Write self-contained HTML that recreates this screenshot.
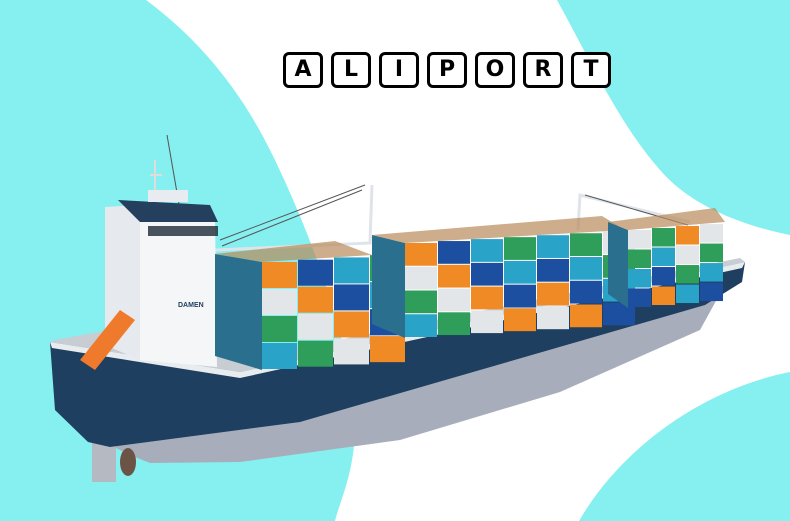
<!DOCTYPE html>
<html><head><meta charset="utf-8"><style>
html,body{margin:0;padding:0;width:790px;height:521px;overflow:hidden;background:#fff}
svg{position:absolute;left:0;top:0}
.t{position:absolute;top:52px;left:283px;display:flex;gap:8px}
.t span{width:34px;height:30px;border:3px solid #000;border-radius:6px;background:#fff;font:bold 22px "DejaVu Sans","Liberation Sans",sans-serif;display:flex;align-items:center;justify-content:center;line-height:1;color:#000}
</style></head><body>
<svg width="790" height="521" viewBox="0 0 790 521">
<rect width="790" height="521" fill="#86EFEF"/>
<path d="M146,0 C200,40 240,90 270,150 C300,210 350,330 355,420 C356,470 340,500 335,521 L579,521 C620,450 700,390 790,372 L790,235 C740,225 690,205 660,170 C620,125 590,60 557,0 Z" fill="#fff"/>
<g stroke="#dfe4ea" stroke-width="3" fill="none">
<path d="M215,250 L370,243 L372,185"/><path d="M578,230 L580,195 L690,222"/>
</g>
<g stroke="#555" stroke-width="1" fill="none"><path d="M220,240 L365,185"/><path d="M222,246 L362,190"/><path d="M585,195 L688,225"/><path d="M167,135 L180,210"/></g>
<path d="M110,445 L300,420 L700,305 L722,290 L700,330 L560,392 L400,440 L240,462 L150,463 L130,455 Z" fill="#a8adbb"/>
<rect x="92" y="440" width="24" height="42" fill="#b5b9c2"/>
<ellipse cx="128" cy="462" rx="8" ry="14" fill="#6b5445"/>
<path d="M50,342 L240,372 L745,262 L742,282 L705,305 L300,422 L110,447 L88,442 L55,410 Z" fill="#1f3f60"/>
<path d="M50,342 L240,372 L745,262 L742,268 L240,378 L52,348 Z" fill="#e9ecef"/>
<path d="M55,340 L110,330 L240,360 L740,258 L745,262 L240,372 L50,342 Z" fill="#c8cdd3"/>
<path d="M105,207 L140,205 L140,360 L105,345 Z" fill="#e6e9ee"/>
<path d="M140,210 L215,215 L217,367 L140,360 Z" fill="#f4f6f8"/>
<path d="M118,200 L210,205 L218,222 L140,222 Z" fill="#24405e"/>
<rect x="148" y="190" width="40" height="12" fill="#e8ebef"/>
<path d="M155,160 L155,190 M150,175 L162,175" stroke="#ddd" stroke-width="2"/>
<rect x="148" y="226" width="70" height="10" fill="#1e2a36" opacity=".8"/>
<text x="178" y="307" font-family="Liberation Sans,sans-serif" font-size="7" font-weight="bold" fill="#24405e">DAMEN</text>
<path d="M80,360 L120,310 L135,320 L95,370 Z" fill="#f07a2c"/>
<g id="c"></g>
</svg>
<div class="t"><span>A</span><span>L</span><span>I</span><span>P</span><span>O</span><span>R</span><span>T</span></div>
<script>
var cols=['#1c4fa0','#2e9e5a','#f08a24','#2aa3c9','#e3e6e9'];
var g=document.getElementById('c'),s='';
function bay(x0,x1,yt0,yt1,h,n,w,side){
 s+='<path d="M'+(x0-side)+','+(yt0-8)+' L'+x0+','+yt0+' L'+x0+','+(yt0+h)+' L'+(x0-side)+','+(yt0+h-14)+' Z" fill="#2b6f8f"/>';
 var k=0;
 for(var x=x0;x<x1-1;x+=w){
  var yt=yt0+(yt1-yt0)*(x-x0)/(x1-x0);
  var th=h/n;
  for(var i=0;i<n;i++){
   var c=cols[(k*3+i*2+Math.floor(x/7))%5];
   s+='<rect x="'+x+'" y="'+(yt+i*th)+'" width="'+(w-1)+'" height="'+(th-1)+'" fill="'+c+'"/>';
  }k++;
 }
 s+='<path d="M'+(x0-side)+','+(yt0-8)+' L'+(x1-side+10)+','+(yt1-14)+' L'+x1+','+yt1+' L'+x0+','+yt0+' Z" fill="#b88a5a" opacity=".7"/>';
}
bay(262,372,262,255,108,4,36,47);
bay(405,625,243,230,95,4,33,33);
bay(628,725,230,222,78,4,24,20);
g.innerHTML=s;
</script>
</body></html>
